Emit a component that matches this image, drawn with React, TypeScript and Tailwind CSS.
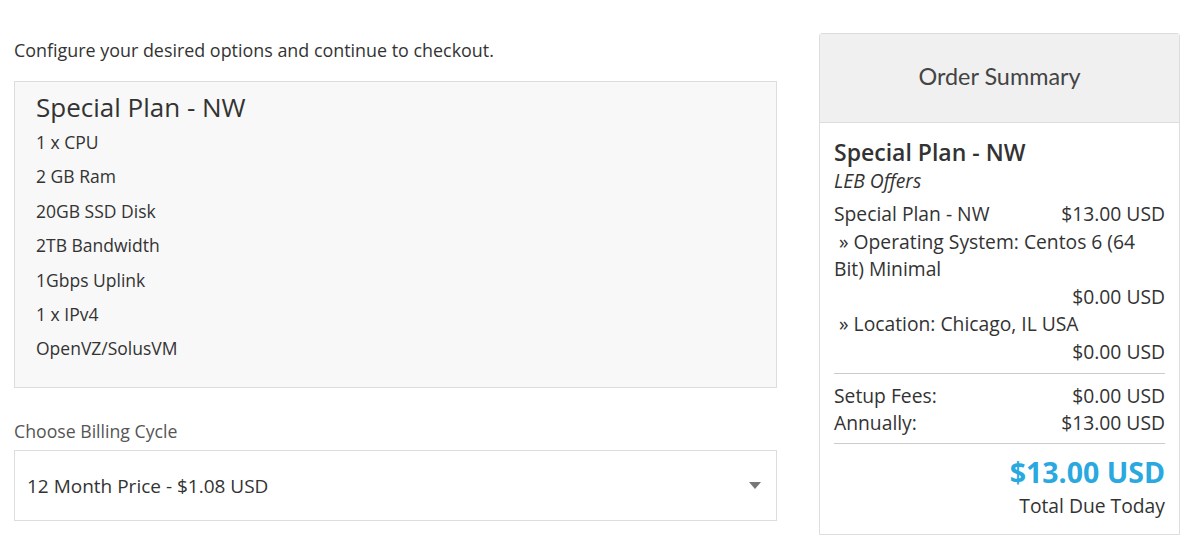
import React from "react";

const features = [
  "1 x CPU",
  "2 GB Ram",
  "20GB SSD Disk",
  "2TB Bandwidth",
  "1Gbps Uplink",
  "1 x IPv4",
  "OpenVZ/SolusVM",
];

export default function App() {
  return (
    <div
      className="w-[1200px] h-[545px] bg-white text-[#333] overflow-hidden flex gap-[42px] pl-[14px] pt-[37px]"
      style={{ fontFamily: '"Open Sans", "Liberation Sans", sans-serif' }}
    >
      {/* Left column - product config */}
      <div className="w-[763px] flex flex-col">
        <p className="text-[17.9px] leading-[26px] mb-[18px]">
          Configure your desired options and continue to checkout.
        </p>

        <div className="bg-[#f8f8f8] border border-[#dddddd] h-[307px] px-[21px] pt-[8px]">
          <h2 className="text-[26px] leading-[35px] mb-[0px]">Special Plan - NW</h2>
          <ul className="flex flex-col">
            {features.map((f) => (
              <li key={f} className="text-[17.5px] leading-[34.4px]">
                {f}
              </li>
            ))}
          </ul>
        </div>

        <label className="text-[17.7px] leading-[24px] text-[#555] mt-[31px] mb-[7px]">
          Choose Billing Cycle
        </label>
        <div className="h-[71px] border border-[#dddddd] flex items-center justify-between pl-[12px] pr-[14px]">
          <span className="text-[19px] pt-[1px]">12 Month Price - $1.08 USD</span>
          <svg width="12" height="7" viewBox="0 0 12 7" className="mr-[1px]">
            <path d="M0 0 H12 L6 7 Z" fill="#777" />
          </svg>
        </div>
      </div>

      {/* Right column - order summary */}
      <div className="w-[361px] h-[502px] -mt-[4px] border border-[#dddddd] rounded-t-[3px] flex flex-col">
        <div className="h-[89px] bg-[#f0f0f0] border-b border-[#dddddd] flex items-center justify-center">
          <h3
            className="text-[23.4px] text-[#444] -mt-[2px]"
            style={{ fontFamily: 'Lato, "Open Sans", sans-serif' }}
          >
            Order Summary
          </h3>
        </div>

        <div className="px-[14px] pt-[14px] text-[19.3px] leading-[27.6px]">
          <div className="text-[23px] font-semibold leading-[30px]">Special Plan - NW</div>
          <div className="italic leading-[27px] mb-[6px]">LEB Offers</div>

          <div className="flex justify-between">
            <span>Special Plan - NW</span>
            <span>$13.00 USD</span>
          </div>
          <div className="pr-[24px]">&nbsp;» Operating System: Centos 6 (64 Bit) Minimal</div>
          <div className="text-right">$0.00 USD</div>
          <div>&nbsp;» Location: Chicago, IL USA</div>
          <div className="text-right">$0.00 USD</div>

          <div className="border-t border-[#cccccc] mt-[7px] pt-[8px]">
            <div className="flex justify-between leading-[27px]">
              <span>Setup Fees:</span>
              <span>$0.00 USD</span>
            </div>
            <div className="flex justify-between leading-[27px]">
              <span>Annually:</span>
              <span>$13.00 USD</span>
            </div>
          </div>

          <div className="border-t border-[#cccccc] mt-[7px] pt-[9px] flex flex-col items-end">
            <div className="text-[28.5px] font-bold text-[#2aa8e0] leading-[38px]">$13.00 USD</div>
            <div className="leading-[30px]">Total Due Today</div>
          </div>
        </div>
      </div>
    </div>
  );
}
